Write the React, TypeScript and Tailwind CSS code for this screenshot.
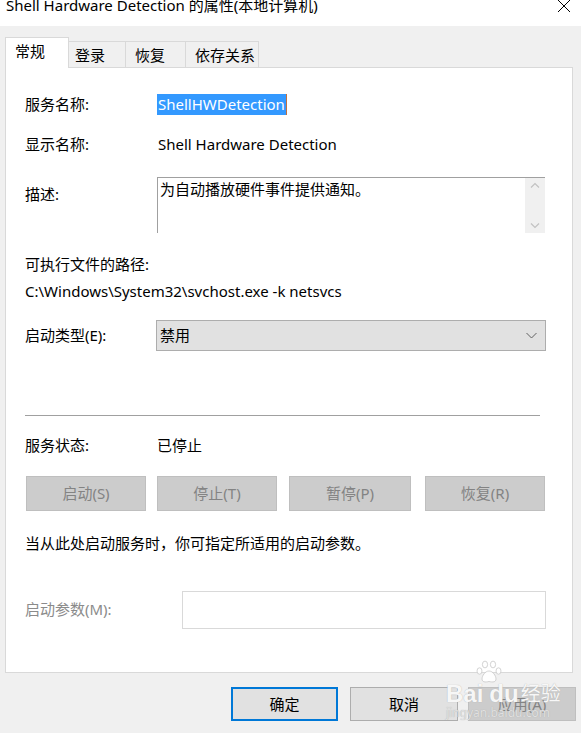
export default function App() {
  const font = { fontFamily: '"Noto Sans", "Noto Sans CJK SC", sans-serif' };

  return (
    <div
      className="relative w-[581px] h-[733px] overflow-hidden bg-[#f0f0f0] text-[15px] text-[#000000] leading-[21px]"
      style={font}
    >
      {/* Title bar */}
      <div className="h-[26px] bg-white flex justify-between">
        <div className="pl-[6px] -mt-[5px] text-[15px] text-black whitespace-nowrap">
          Shell Hardware Detection 的属性(本地计算机)
        </div>
        <svg width="14" height="14" viewBox="0 0 14 14" className="mr-[10px] -mt-[1px]">
          <path d="M1 1 L13 13 M13 1 L1 13" stroke="#000" strokeWidth="1" />
        </svg>
      </div>

      {/* Tabs */}
      <div className="mt-[11px] px-[5px] flex items-end h-[30px]">
        <div className="relative z-10 -mb-px h-[31px] w-[64px] bg-white border-l border-t border-r border-[#d9d9d9] pl-[9px] pt-[3px]">
          常规
        </div>
        <div className="h-[26px] w-[57px] bg-[#f0f0f0] border-t border-r border-[#d9d9d9] pl-[6px] pt-[3px]">
          登录
        </div>
        <div className="h-[26px] w-[60px] bg-[#f0f0f0] border-t border-r border-[#d9d9d9] pl-[9px] pt-[3px]">
          恢复
        </div>
        <div className="h-[26px] w-[73px] bg-[#f0f0f0] border-t border-r border-[#d9d9d9] pl-[9px] pt-[3px]">
          依存关系
        </div>
      </div>

      {/* Panel */}
      <div className="mx-[5px] w-[568px] h-[606px] bg-white border border-[#d9d9d9] pl-[19px] flex flex-col">
        <div className="mt-[26px] flex h-[21px]">
          <div className="w-[132px]">服务名称:</div>
          <div className="bg-[#3399ff] text-white pl-[1px] pr-[1px] border-r border-[#c07040]">
            ShellHWDetection
          </div>
        </div>

        <div className="mt-[19px] flex h-[21px]">
          <div className="w-[133px]">显示名称:</div>
          <div>Shell Hardware Detection</div>
        </div>

        <div className="mt-[22px] flex h-[56px]">
          <div className="w-[132px] pt-[7px]">描述:</div>
          <div className="w-[388px] border-t border-l border-[#a0a0a0] flex">
            <div className="flex-1 pl-[2px] pt-[1px]">为自动播放硬件事件提供通知。</div>
            <div className="w-[20px] bg-[#f0f0f0] flex flex-col items-center justify-between py-[4px]">
              <svg width="10" height="6" viewBox="0 0 10 6">
                <path d="M1 5.5 L5 1.5 L9 5.5" fill="none" stroke="#c2c2c2" strokeWidth="1.2" />
              </svg>
              <svg width="10" height="6" viewBox="0 0 10 6">
                <path d="M1 0.5 L5 4.5 L9 0.5" fill="none" stroke="#c2c2c2" strokeWidth="1.2" />
              </svg>
            </div>
          </div>
        </div>

        <div className="mt-[21px] h-[21px]">可执行文件的路径:</div>
        <div className="mt-[6px] h-[21px]">C:\Windows\System32\svchost.exe -k netsvcs</div>

        <div className="mt-[18px] flex h-[31px]">
          <div className="w-[131px] pt-[5px]">启动类型(E):</div>
          <div className="w-[390px] bg-[#e1e1e1] border border-[#adadad] flex items-center justify-between pl-[3px] pr-[8px]">
            <span>禁用</span>
            <svg width="11" height="7" viewBox="0 0 11 7">
              <path d="M0.5 1 L5.5 6 L10.5 1" fill="none" stroke="#606060" strokeWidth="1" />
            </svg>
          </div>
        </div>

        <div className="mt-[64px] w-[515px] h-px bg-[#a0a0a0]" />

        <div className="mt-[19px] flex h-[21px]">
          <div className="w-[132px]">服务状态:</div>
          <div>已停止</div>
        </div>

        <div className="mt-[20px] flex h-[35px] pl-px text-[#838383]">
          <div className="w-[120px] bg-[#cccccc] border border-[#bfbfbf] flex items-center justify-center">启动(S)</div>
          <div className="ml-[11px] w-[120px] bg-[#cccccc] border border-[#bfbfbf] flex items-center justify-center">停止(T)</div>
          <div className="ml-[12px] w-[122px] bg-[#cccccc] border border-[#bfbfbf] flex items-center justify-center">暂停(P)</div>
          <div className="ml-[14px] w-[120px] bg-[#cccccc] border border-[#bfbfbf] flex items-center justify-center">恢复(R)</div>
        </div>

        <div className="mt-[22px] h-[21px]">当从此处启动服务时，你可指定所适用的启动参数。</div>

        <div className="mt-[37px] flex h-[38px]">
          <div className="w-[157px] pt-[8px] text-[#8b8b8b]">启动参数(M):</div>
          <div className="w-[364px] bg-white border border-[#d9d9d9]" />
        </div>
      </div>

      {/* Dialog buttons */}
      <div className="mt-[14px] flex h-[34px] pl-[231px]">
        <div className="w-[107px] bg-[#e1e1e1] border-2 border-[#0078d7] flex items-center justify-center">确定</div>
        <div className="ml-[12px] w-[108px] bg-[#e1e1e1] border border-[#adadad] flex items-center justify-center">取消</div>
        <div className="ml-[10px] w-[108px] bg-[#cccccc] border border-[#bfbfbf] flex items-center justify-center text-[#838383]">应用(A)</div>
      </div>

      {/* Watermark */}
      <div className="absolute left-[446px] top-[660px] flex flex-col items-start text-white/90 pointer-events-none [text-shadow:0_0_1px_#a8a8a8]">
        <svg width="26" height="24" viewBox="0 0 26 24" className="ml-[30px]">
          <g fill="#ffffff" fillOpacity="0.9" stroke="#c8c8c8" strokeWidth="0.8">
            <ellipse cx="9" cy="4.5" rx="2.6" ry="3.4" />
            <ellipse cx="17" cy="4.5" rx="2.6" ry="3.4" />
            <ellipse cx="3.5" cy="11" rx="2.5" ry="3.2" />
            <ellipse cx="22.5" cy="11" rx="2.5" ry="3.2" />
            <path d="M13 11 C9 11 6 16 6 19 C6 22 9 22.5 13 21.5 C17 22.5 20 22 20 19 C20 16 17 11 13 11 Z" />
          </g>
        </svg>
        <div className="flex items-end leading-[24px] -mt-[2px]">
          <span className="text-[24px] font-bold" style={{ fontFamily: '"Liberation Sans", sans-serif' }}>Bai</span>
          <span className="text-[24px] font-bold ml-[6px]" style={{ fontFamily: '"Liberation Sans", sans-serif' }}>du</span>
          <span className="text-[20px] ml-[2px]">经验</span>
        </div>
        <div className="text-[12px] leading-[14px] text-[#e0e0e0]">jingyan.baidu.com</div>
      </div>
    </div>
  );
}
